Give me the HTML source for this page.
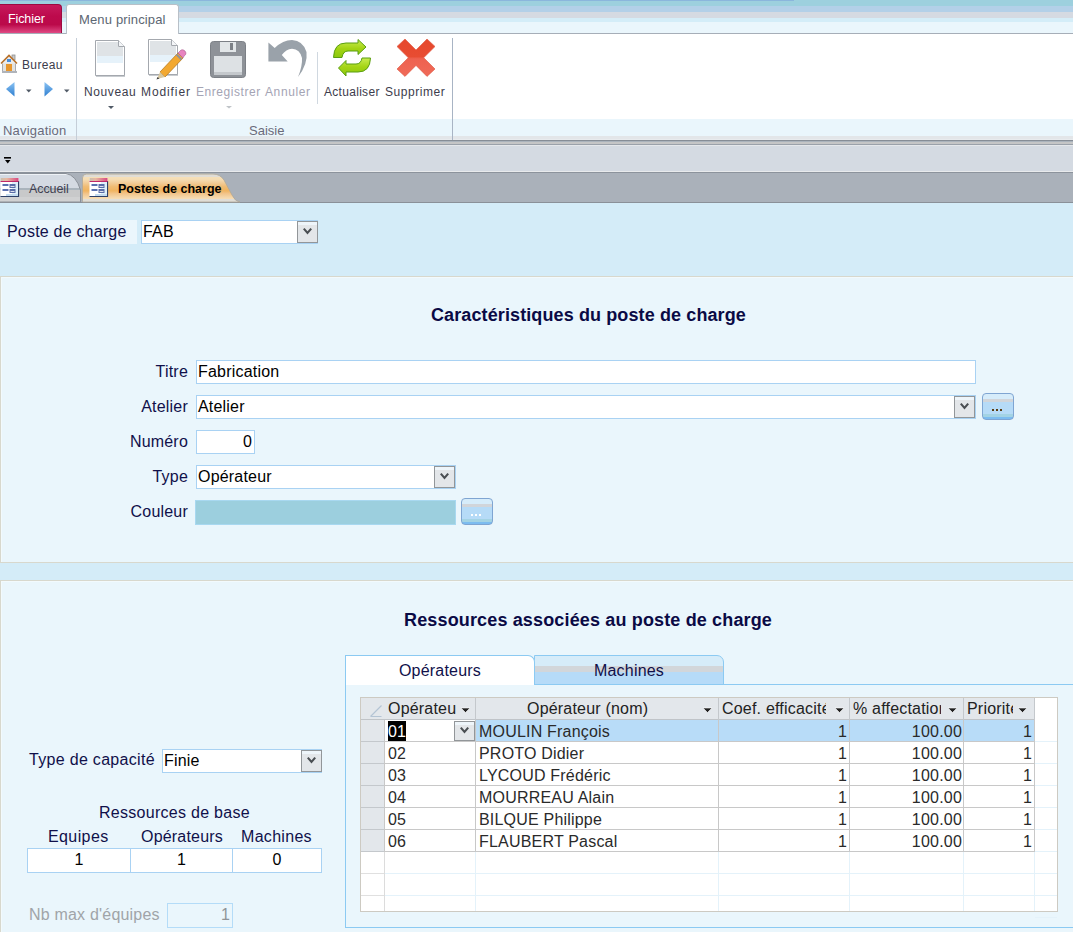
<!DOCTYPE html>
<html><head><meta charset="utf-8">
<style>
*{margin:0;padding:0;box-sizing:border-box}
html,body{width:1073px;height:932px;overflow:hidden;background:#eaf6fc;font-family:"Liberation Sans",sans-serif}
.a{position:absolute}
.rb{font-size:12px;color:#3c3c4c;white-space:nowrap}
.dis{color:#a4a4b4}
.f{font-size:16px;color:#10104a;white-space:nowrap}
.lbl{position:absolute;font-size:16px;color:#10104a;white-space:nowrap;text-align:right}
.tb{position:absolute;background:#fff;border:1px solid #a9d2f3}
.dd{position:absolute;background:#e3e6e9;border:1px solid #929699}
.dd:before{content:"";position:absolute;left:0;top:0;right:0;height:3px;background:#eef5fa}
.dd svg{position:absolute;left:0;top:0}
.btn{position:absolute;border:1px solid #7fa5d2;border-radius:4px;background:linear-gradient(#d6ecfa 0,#d6ecfa 5px,#d1d5da 5px,#d1d5da 8px,#b6dbf7 8px,#b6dbf7 20px,#a3d3e4 20px,#a3d3e4 23px,#7cbcf0 23px)}
.dots{position:absolute;left:9px;top:15px;width:10px;height:2px;background:linear-gradient(90deg,#5a3c10 0 2px,transparent 2px 4px,#5a3c10 4px 6px,transparent 6px 8px,#5a3c10 8px 10px)}
.sec{position:absolute;left:0;width:1073px;border-top:1px solid #d8d8cd;border-left:1px solid #d8d8cd;border-bottom:1px solid #d8d8cd;background:#eaf6fc;box-shadow:inset 1px 1px 0 #f2fafd}
.hdr{position:absolute;top:0;height:22px;background:#e3e7eb;border-right:1px solid #c2c6ca;border-bottom:1px solid #c2c6ca;font-size:16px;color:#222;white-space:nowrap;overflow:hidden}
.cell{position:absolute;height:22px;border-right:1px solid #c8c8c8;border-bottom:1px solid #c8c8c8;font-size:16px;color:#2a2a2a;white-space:nowrap;overflow:hidden;line-height:21px}
.f,.lbl,div[style*="font-size:16px"]{margin-top:1px;letter-spacing:0.2px}
.arr{position:absolute;width:0;height:0;border-left:4px solid transparent;border-right:4px solid transparent;border-top:4px solid #333}
</style></head><body>

<!-- title bands -->
<div class="a" style="left:0;top:0;width:1073px;height:6px;background:#9dd0de"></div>
<div class="a" style="left:0;top:0;width:794px;height:1px;background:#8bb6dc"></div>
<div class="a" style="left:0;top:6px;width:1073px;height:6px;background:#b3d0e8"></div>
<div class="a" style="left:0;top:12px;width:1073px;height:6px;background:#d5dae2"></div>
<div class="a" style="left:0;top:18px;width:1073px;height:4px;background:#d4edf8"></div>
<div class="a" style="left:0;top:22px;width:1073px;height:11px;background:#eaf6fc"></div>
<div class="a" style="left:0;top:33px;width:1073px;height:1px;background:#a6aeb8"></div>

<!-- Fichier -->
<div class="a" style="left:0;top:4px;width:62px;height:29px;border-radius:0 4px 0 0;background:linear-gradient(#c61a5c 0,#bd0a4c 40%,#bb0a4a 70%,#e04a84 100%);border:1px solid #9c0a40;border-left:none;border-bottom:none"></div>
<div class="a" style="left:8px;top:12px;font-size:12.5px;color:#fff;letter-spacing:-0.1px">Fichier</div>
<!-- Menu principal tab -->
<div class="a" style="left:66px;top:4px;width:113px;height:31px;background:#fff;border:1px solid #b8c0c8;border-bottom:none;border-radius:3px 3px 0 0"></div>
<div class="a rb" style="left:79px;top:12px;font-size:13px;color:#5c6672;letter-spacing:0.15px">Menu principal</div>

<!-- ribbon -->
<div class="a" style="left:0;top:34px;width:1073px;height:85px;background:#fff"></div>
<div class="a" style="left:0;top:119px;width:1073px;height:17px;background:#eaf6fc"></div>
<div class="a" style="left:0;top:136px;width:1073px;height:3px;background:#e3e6e9"></div>
<div class="a" style="left:0;top:139px;width:1073px;height:1px;background:#e8ebee"></div>
<div class="a" style="left:0;top:140px;width:1073px;height:1px;background:#868d96"></div>
<div class="a" style="left:0;top:141px;width:1073px;height:1px;background:#aab3bc"></div>
<div class="a" style="left:0;top:142px;width:1073px;height:2px;background:#c4c5c6"></div>
<div class="a" style="left:0;top:144px;width:1073px;height:1px;background:#9aa1aa"></div>
<div class="a" style="left:0;top:145px;width:1073px;height:1px;background:#e4e7ea"></div>
<div class="a" style="left:0;top:146px;width:1073px;height:25px;background:#d4dae2"></div>
<div class="a" style="left:0;top:171px;width:1073px;height:1px;background:#e8eaec"></div>
<div class="a" style="left:0;top:172px;width:1073px;height:1px;background:#8c939c"></div>
<div class="a" style="left:0;top:173px;width:1073px;height:29px;background:#aab1ba"></div>
<div class="a" style="left:0;top:202px;width:1073px;height:1px;background:#8a9098"></div>

<!-- group separators -->
<div class="a" style="left:76px;top:38px;width:1px;height:102px;background:#c5ced8"></div>
<div class="a" style="left:452px;top:38px;width:1px;height:102px;background:#a8b4c4"></div>
<div class="a" style="left:317px;top:52px;width:1px;height:52px;background:#d0d8e0"></div>

<div class="a rb" style="left:3px;top:123px;font-size:13px;color:#6a6a7a;letter-spacing:0.2px">Navigation</div>
<div class="a rb" style="left:249px;top:123px;font-size:13px;color:#6a6a7a">Saisie</div>

<div class="a rb" style="left:22px;top:58px;letter-spacing:0.35px">Bureau</div>
<div class="a rb" style="left:84px;top:85px;letter-spacing:0.6px">Nouveau</div>
<div class="a rb" style="left:141px;top:85px;letter-spacing:0.9px">Modifier</div>
<div class="a rb dis" style="left:196px;top:85px;letter-spacing:0.55px">Enregistrer</div>
<div class="a rb dis" style="left:265px;top:85px;letter-spacing:0.6px">Annuler</div>
<div class="a rb" style="left:324px;top:85px;letter-spacing:0.3px">Actualiser</div>
<div class="a rb" style="left:385px;top:85px;letter-spacing:0.55px">Supprimer</div>


<!-- ribbon icons -->
<svg class="a" style="left:0;top:0" width="460" height="210" viewBox="0 0 460 210">
 <defs>
  <linearGradient id="gb" x1="0" y1="0" x2="0" y2="1"><stop offset="0" stop-color="#8cc4f4"/><stop offset="1" stop-color="#2e7ed0"/></linearGradient>
  <linearGradient id="gg" x1="0" y1="0" x2="0" y2="1"><stop offset="0" stop-color="#c8ec50"/><stop offset="0.5" stop-color="#a4d414"/><stop offset="1" stop-color="#8cc80c"/></linearGradient>
  <linearGradient id="gr" x1="0" y1="0" x2="0" y2="1"><stop offset="0" stop-color="#e6482c"/><stop offset="0.47" stop-color="#e84c32"/><stop offset="0.53" stop-color="#ee6250"/><stop offset="1" stop-color="#f06a58"/></linearGradient>
 </defs>
 <!-- house -->
 <rect x="2.5" y="62.5" width="13" height="9" fill="#e2e2e0" stroke="#a8aab0"/>
 <rect x="12" y="55" width="3" height="5" fill="#c8c8c8" stroke="#909090" stroke-width="0.8"/>
 <path d="M1,63.5 L9,55.5 L17,63.5" fill="#ececec" stroke="#b87028" stroke-width="1.6"/>
 <rect x="7" y="59" width="4" height="3" fill="#4c8ed8"/>
 <rect x="6" y="64" width="6" height="8" fill="#e8962c"/>
 <rect x="2" y="71" width="15" height="2" fill="#b0b4ba"/>
 <!-- nav arrows -->
 <path d="M6,89 L14.5,82 L14.5,96.5 Z" fill="url(#gb)"/>
 <path d="M53,89 L44.5,82 L44.5,96.5 Z" fill="url(#gb)"/>
 <path d="M26,89.5 H31.5 L28.75,92.5 Z" fill="#505a66"/>
 <path d="M64,89.5 H69.5 L66.75,92.5 Z" fill="#505a66"/>
 <!-- Nouveau page -->
 <rect x="96" y="75" width="29" height="2" fill="#c8ccd0"/>
 <path d="M95.5,40.5 H118.5 L124.5,46.5 V75.5 H95.5 Z" fill="#fff" stroke="#a4a8ae"/>
 <rect x="97" y="42" width="21" height="14" fill="#dfe3e6"/>
 <rect x="97" y="47" width="26" height="9" fill="#dfe3e6"/>
 <rect x="97" y="56" width="26" height="7" fill="#e6f2fa"/>
 <path d="M118.5,40.5 V46.5 H124.5" fill="#f4f6f8" stroke="#a4a8ae"/>
 <path d="M108,106 H114 L111,109 Z" fill="#505a66"/>
 <!-- Modifier page -->
 <rect x="149" y="74" width="29" height="2" fill="#c8ccd0"/>
 <path d="M148.5,39.5 H171.5 L177.5,45.5 V74.5 H148.5 Z" fill="#fff" stroke="#a4a8ae"/>
 <rect x="150" y="41" width="21" height="14" fill="#dfe3e6"/>
 <rect x="150" y="46" width="26" height="9" fill="#dfe3e6"/>
 <rect x="150" y="55" width="26" height="7" fill="#e6f2fa"/>
 <path d="M171.5,39.5 V45.5 H177.5" fill="#f4f6f8" stroke="#a4a8ae"/>
 <path d="M160,72 L178,53 L183,58 L165,77 Z" fill="#f2a830" stroke="#b87a20" stroke-width="0.8"/>
 <path d="M178,53 L181,50 Q183,49 185,51 L186,53 Q186,55 184,56 L183,58 Z" fill="#e884c0" stroke="#a86090" stroke-width="0.6"/>
 <path d="M176.5,54.5 L181.5,59.5" stroke="#909098" stroke-width="2"/>
 <path d="M160,72 L165,77 L157,79 Z" fill="#d8c8a0"/>
 <path d="M157.5,77 L159.5,78.5 L156.5,79.5 Z" fill="#404040"/>
 <!-- floppy -->
 <rect x="210.5" y="41.5" width="35" height="36" rx="3" fill="#8e9298" stroke="#7c8086"/>
 <rect x="220" y="42" width="16" height="10" fill="#e2e6e8"/>
 <rect x="230" y="43" width="3" height="7" fill="#7c8086"/>
 <rect x="214" y="56" width="28" height="19" fill="#dde1e4"/>
 <rect x="214" y="72" width="28" height="3" fill="#c4c8cc"/>
 <path d="M226,106 H232 L229,108.5 Z" fill="#c0c4c8"/>
 <!-- undo -->
 <path d="M268.4,42.4 L274.7,48 Q283,40 292,40 Q303,40.5 306.5,52 Q308,64 298,77 Q302.5,66 302,58 Q300,49 292,48.7 Q286,49 281.8,55 L287.7,61.5 L268.4,61.5 Z" fill="#9aa2aa"/>
 <!-- refresh -->
 <path d="M333.5,57.5 Q334,43 346,43 L358,43 L358,39.5 L366,47 L358,54.5 L358,51 L348,51 Q343,51 342,57.5 Z" fill="url(#gg)" stroke="#5a9e10" stroke-width="1" stroke-linejoin="round"/>
 <path d="M370.5,58 Q370,72 358,72 L346,72 L346,76 L338.5,68 L346,60.5 L346,64 L356,64 Q361,64 362,58 Z" fill="url(#gg)" stroke="#5a9e10" stroke-width="1" stroke-linejoin="round"/>
 <!-- X -->
 <path d="M416,50 L427,39 L435,46.5 L423.7,57.7 L435,69 L427,76.4 L416,65.4 L405,76.4 L397,69 L408.3,57.7 L397,46.5 L405,39 Z" fill="url(#gr)" stroke="#e0604c" stroke-width="0.7" stroke-linejoin="round"/>
 <!-- toolbar glyph -->
 <rect x="4" y="157" width="7" height="1.6" fill="#000"/>
 <path d="M5,160 H10.5 L7.75,163.5 Z" fill="#000"/>
</svg>


<!-- document tabs -->
<svg class="a" style="left:0;top:170px" width="260" height="34" viewBox="0 170 260 34">
 <defs>
  <linearGradient id="go" x1="0" y1="174" x2="0" y2="202" gradientUnits="userSpaceOnUse">
   <stop offset="0" stop-color="#d8d2c6"/><stop offset="0.04" stop-color="#e0ddd6"/><stop offset="0.1" stop-color="#e0ddd6"/>
   <stop offset="0.12" stop-color="#f5dfb8"/><stop offset="0.2" stop-color="#f5dcb2"/><stop offset="0.32" stop-color="#f2cc98"/>
   <stop offset="0.45" stop-color="#f0bc74"/><stop offset="0.6" stop-color="#f0b460"/><stop offset="0.7" stop-color="#f2c48a"/>
   <stop offset="0.8" stop-color="#f4d2a2"/><stop offset="0.88" stop-color="#f6dcb4"/><stop offset="0.9" stop-color="#e0ddd6"/><stop offset="1" stop-color="#e0ddd6"/>
  </linearGradient>
  <linearGradient id="gac" x1="0" y1="174" x2="0" y2="202" gradientUnits="userSpaceOnUse">
   <stop offset="0" stop-color="#f2f4f6"/><stop offset="0.05" stop-color="#d4dae2"/><stop offset="0.5" stop-color="#d4dae2"/>
   <stop offset="0.5" stop-color="#aab4bc"/><stop offset="0.56" stop-color="#aab4bc"/><stop offset="0.56" stop-color="#c8c9ca"/>
   <stop offset="0.82" stop-color="#c8c9ca"/><stop offset="0.82" stop-color="#d0d1d2"/><stop offset="1" stop-color="#d0d1d2"/>
  </linearGradient>
  <linearGradient id="gpk" x1="0" y1="0" x2="1" y2="0"><stop offset="0" stop-color="#c8c0b0"/><stop offset="0.35" stop-color="#e8b8a0"/><stop offset="1" stop-color="#d84880"/></linearGradient>
 </defs>
 <path d="M-2,202 V173.5 H66 Q76,175 80.5,190 V202 Z" fill="url(#gac)" stroke="#8a9098" stroke-width="1"/>
 <rect x="0" y="174" width="66" height="1" fill="#eef2f6"/>
 <path d="M82.5,202 V178 Q82.5,174 86.5,174 H213 Q220,174 224,180 L232,195 Q235,201.5 240,202 Z" fill="url(#go)" stroke="#b0a898" stroke-width="0.8"/>
 <g id="fi">
  <rect x="0.5" y="178" width="18" height="18.5" fill="#fff"/>
  <path d="M18.5,181 V196.5 H0.5" fill="none" stroke="#2c4068" stroke-width="1.2"/>
  <rect x="0.5" y="178" width="18" height="3" fill="url(#gpk)"/>
  <rect x="0.5" y="181" width="18" height="1" fill="#c02868"/>
  <rect x="12" y="182" width="6" height="14" fill="#dff0fa"/>
  <rect x="6" y="194" width="12" height="2" fill="#c4dcf0"/>
  <rect x="2.5" y="184" width="6" height="2" fill="#5a70b0"/>
  <rect x="2.5" y="189" width="6" height="2" fill="#5a70b0"/>
  <rect x="9.5" y="184" width="6" height="4" fill="#5a6ea8"/>
  <rect x="10.5" y="186" width="4" height="0.8" fill="#fff"/>
  <rect x="9.5" y="189" width="6" height="4" fill="#5a6ea8"/>
  <rect x="10.5" y="191" width="4" height="0.8" fill="#fff"/>
 </g>
 <use href="#fi" x="89"/>
</svg>
<div class="a" style="left:29px;top:182px;font-size:12.5px;color:#404050;letter-spacing:-0.1px">Accueil</div>
<div class="a" style="left:118px;top:182px;font-size:12.5px;font-weight:bold;color:#000;letter-spacing:0px">Postes de charge</div>

<!-- FORM AREA -->
<div class="a" style="left:0;top:203px;width:1073px;height:729px;background:#d4ecf8"></div>
<div class="a" style="left:0;top:220px;width:137px;height:24px;background:#ebf6fc"></div>
<div class="a f" style="left:7px;top:222px">Poste de charge</div>
<div class="tb" style="left:141px;top:220px;width:177px;height:24px"></div>
<div class="a f" style="left:143px;top:222px;color:#000">FAB</div>
<div class="dd" style="left:297px;top:221px;width:21px;height:22px"><svg width="19" height="20"><path d="M5.8,6.6 L9.5,10.9 L13.2,6.6" fill="none" stroke="#4a4e52" stroke-width="2.1"/></svg></div>

<!-- section 1 -->
<div class="sec" style="top:276px;height:287px"></div>
<div class="a f" style="left:431px;top:304px;font-size:18px;font-weight:bold;color:#0a0a45;letter-spacing:0.11px">Caractéristiques du poste de charge</div>
<div class="lbl" style="left:100px;top:362px;width:88px">Titre</div>
<div class="lbl" style="left:100px;top:397px;width:88px">Atelier</div>
<div class="lbl" style="left:100px;top:432px;width:88px">Numéro</div>
<div class="lbl" style="left:100px;top:467px;width:88px">Type</div>
<div class="lbl" style="left:100px;top:502px;width:88px">Couleur</div>
<div class="tb" style="left:196px;top:360px;width:780px;height:24px"></div>
<div class="a f" style="left:198px;top:362px;color:#000">Fabrication</div>
<div class="tb" style="left:196px;top:395px;width:780px;height:24px"></div>
<div class="a f" style="left:198px;top:397px;color:#000">Atelier</div>
<div class="dd" style="left:954px;top:396px;width:21px;height:22px"><svg width="19" height="20"><path d="M5.8,6.6 L9.5,10.9 L13.2,6.6" fill="none" stroke="#4a4e52" stroke-width="2.1"/></svg></div>
<div class="btn" style="left:982px;top:393px;width:32px;height:27px"><div class="dots"></div></div>
<div class="tb" style="left:196px;top:430px;width:59px;height:24px"></div>
<div class="a f" style="left:196px;top:432px;width:56px;text-align:right;color:#000">0</div>
<div class="tb" style="left:196px;top:465px;width:260px;height:24px"></div>
<div class="a f" style="left:198px;top:467px;color:#000">Opérateur</div>
<div class="dd" style="left:434px;top:466px;width:21px;height:22px"><svg width="19" height="20"><path d="M5.8,6.6 L9.5,10.9 L13.2,6.6" fill="none" stroke="#4a4e52" stroke-width="2.1"/></svg></div>
<div class="a" style="left:195px;top:500px;width:261px;height:25px;background:#9ccfde;border:1px solid #a8d8f0"></div>
<div class="btn" style="left:461px;top:498px;width:32px;height:27px"><div class="dots" style="background:linear-gradient(90deg,#fff 0 2px,transparent 2px 4px,#fff 4px 6px,transparent 6px 8px,#fff 8px 10px)"></div></div>

<!-- section 2 -->
<div class="sec" style="top:580px;height:360px"></div>
<div class="a f" style="left:404px;top:609px;font-size:18px;font-weight:bold;color:#0a0a45;letter-spacing:0.15px">Ressources associées au poste de charge</div>

<div class="a f" style="left:29px;top:750px;letter-spacing:0.31px">Type de capacité</div>
<div class="tb" style="left:162px;top:749px;width:160px;height:24px"></div>
<div class="a f" style="left:164px;top:751px;color:#000">Finie</div>
<div class="dd" style="left:301px;top:750px;width:21px;height:22px"><svg width="19" height="20"><path d="M5.8,6.6 L9.5,10.9 L13.2,6.6" fill="none" stroke="#4a4e52" stroke-width="2.1"/></svg></div>
<div class="a f" style="left:99px;top:803px;letter-spacing:0.28px">Ressources de base</div>
<div class="a f" style="left:48px;top:827px;letter-spacing:0.4px">Equipes</div>
<div class="a f" style="left:141px;top:827px">Opérateurs</div>
<div class="a f" style="left:241px;top:827px;letter-spacing:0.3px">Machines</div>
<div class="tb" style="left:27px;top:848px;width:104px;height:25px"></div>
<div class="tb" style="left:130px;top:848px;width:103px;height:25px"></div>
<div class="tb" style="left:232px;top:848px;width:90px;height:25px"></div>
<div class="a f" style="left:27px;top:850px;width:104px;text-align:center;color:#000">1</div>
<div class="a f" style="left:130px;top:850px;width:103px;text-align:center;color:#000">1</div>
<div class="a f" style="left:232px;top:850px;width:90px;text-align:center;color:#000">0</div>
<div class="a f" style="left:29px;top:905px;color:#a0a4a8">Nb max d'équipes</div>
<div class="a" style="left:167px;top:903px;width:66px;height:25px;border:1px solid #b4dcf8;background:#eaf6fc"></div>
<div class="a f" style="left:167px;top:905px;width:63px;text-align:right;color:#909498">1</div>



<!-- tab control -->
<div class="a" style="left:345px;top:684px;width:740px;height:244px;border:1px solid #8ccaf2;border-right:none;background:#eaf6fc"></div>
<div class="a" style="left:534px;top:655px;width:190px;height:30px;border:1px solid #8ccaf2;border-radius:0 7px 0 0;background:linear-gradient(#d6ecf9 0,#d6ecf9 10px,#d2d6da 10px,#d2d6da 16px,#b6dbf8 16px)"></div>
<div class="a" style="left:345px;top:655px;width:190px;height:30px;border:1px solid #8ccaf2;border-bottom:none;border-radius:0 7px 0 0;background:#fff"></div>
<div class="a f" style="left:345px;top:661px;width:190px;text-align:center">Opérateurs</div>
<div class="a f" style="left:534px;top:661px;width:190px;text-align:center">Machines</div>

<!-- grid -->
<div class="a" style="left:360px;top:697px;width:698px;height:215px;background:#fff;border:1px solid #cdcac2"></div>
<div class="a" style="left:361px;top:698px;width:673px;height:22px;background:#e3e7eb;border-bottom:1px solid #c0c4c8"></div>
<div class="a" style="left:475px;top:698px;width:1px;height:22px;background:#c4c8cc"></div>
<div class="a" style="left:718px;top:698px;width:1px;height:22px;background:#c4c8cc"></div>
<div class="a" style="left:849px;top:698px;width:1px;height:22px;background:#c4c8cc"></div>
<div class="a" style="left:963px;top:698px;width:1px;height:22px;background:#c4c8cc"></div>
<div class="a" style="left:1034px;top:698px;width:1px;height:22px;background:#c4c8cc"></div>
<svg class="a" style="left:368px;top:703px" width="16" height="16"><path d="M2.5,13.5 L13.5,2.5 M2.5,13.5 H13.5" stroke="#b4c4d4" stroke-width="1.2" fill="none"/></svg>
<div class="a" style="left:388px;top:699px;width:68px;overflow:hidden;font-size:16px;color:#222;white-space:nowrap">Opérateu</div>
<svg class="a" style="left:460px;top:707px" width="11" height="7"><path d="M1,1 H10 L5.5,5.5 Z" fill="#222" stroke="#fff" stroke-width="0.6"/></svg>
<div class="a" style="left:527px;top:699px;width:173px;overflow:hidden;font-size:16px;color:#222;white-space:nowrap">Opérateur (nom)</div>
<svg class="a" style="left:702px;top:707px" width="11" height="7"><path d="M1,1 H10 L5.5,5.5 Z" fill="#222" stroke="#fff" stroke-width="0.6"/></svg>
<div class="a" style="left:722px;top:699px;width:104px;overflow:hidden;font-size:16px;color:#222;white-space:nowrap">Coef. efficacité</div>
<svg class="a" style="left:834px;top:707px" width="11" height="7"><path d="M1,1 H10 L5.5,5.5 Z" fill="#222" stroke="#fff" stroke-width="0.6"/></svg>
<div class="a" style="left:853px;top:699px;width:88px;overflow:hidden;font-size:16px;color:#222;white-space:nowrap">% affectation</div>
<svg class="a" style="left:947px;top:707px" width="11" height="7"><path d="M1,1 H10 L5.5,5.5 Z" fill="#222" stroke="#fff" stroke-width="0.6"/></svg>
<div class="a" style="left:967px;top:699px;width:46px;overflow:hidden;font-size:16px;color:#222;white-space:nowrap">Priorité</div>
<svg class="a" style="left:1017px;top:707px" width="11" height="7"><path d="M1,1 H10 L5.5,5.5 Z" fill="#222" stroke="#fff" stroke-width="0.6"/></svg>
<div class="a" style="left:361px;top:720px;width:23px;height:22px;background:#e3e7eb;border-bottom:1px solid #c4c8cc"></div>
<div class="a" style="left:384px;top:720px;width:650px;height:22px;background:#b8dcf8;border-bottom:1px solid #c8c8c8;border-left:1px solid #c8c8c8"></div>
<div class="a" style="left:475px;top:720px;width:1px;height:22px;background:#c8c8c8"></div>
<div class="a" style="left:718px;top:720px;width:1px;height:22px;background:#c8c8c8"></div>
<div class="a" style="left:849px;top:720px;width:1px;height:22px;background:#c8c8c8"></div>
<div class="a" style="left:963px;top:720px;width:1px;height:22px;background:#c8c8c8"></div>
<div class="a" style="left:1034px;top:720px;width:1px;height:22px;background:#c8c8c8"></div>
<div class="a" style="left:385px;top:720px;width:90px;height:21px;background:#fff"></div>
<div class="a" style="left:388px;top:721px;width:18px;height:20px;background:#000"></div>
<div class="a" style="left:388px;top:722px;font-size:16px;color:#fff">01</div>
<div class="dd" style="left:454px;top:721px;width:21px;height:20px"><svg width="19" height="20"><path d="M5.8,5.6 L9.5,9.9 L13.2,5.6" fill="none" stroke="#4a4e52" stroke-width="2.1"/></svg></div>
<div class="a" style="left:479px;top:722px;font-size:16px;color:#2a2a2a;white-space:nowrap">MOULIN François</div>
<div class="a" style="left:718px;top:722px;width:129px;text-align:right;font-size:16px;color:#2a2a2a">1</div>
<div class="a" style="left:849px;top:722px;width:113px;text-align:right;font-size:16px;color:#2a2a2a">100.00</div>
<div class="a" style="left:963px;top:722px;width:69px;text-align:right;font-size:16px;color:#2a2a2a">1</div>
<div class="a" style="left:361px;top:742px;width:23px;height:22px;background:#e3e7eb;border-bottom:1px solid #c4c8cc"></div>
<div class="a" style="left:384px;top:742px;width:650px;height:22px;background:#fff;border-bottom:1px solid #c8c8c8;border-left:1px solid #c8c8c8"></div>
<div class="a" style="left:475px;top:742px;width:1px;height:22px;background:#c8c8c8"></div>
<div class="a" style="left:718px;top:742px;width:1px;height:22px;background:#c8c8c8"></div>
<div class="a" style="left:849px;top:742px;width:1px;height:22px;background:#c8c8c8"></div>
<div class="a" style="left:963px;top:742px;width:1px;height:22px;background:#c8c8c8"></div>
<div class="a" style="left:1034px;top:742px;width:1px;height:22px;background:#c8c8c8"></div>
<div class="a" style="left:388px;top:744px;font-size:16px;color:#2a2a2a">02</div>
<div class="a" style="left:479px;top:744px;font-size:16px;color:#2a2a2a;white-space:nowrap">PROTO Didier</div>
<div class="a" style="left:718px;top:744px;width:129px;text-align:right;font-size:16px;color:#2a2a2a">1</div>
<div class="a" style="left:849px;top:744px;width:113px;text-align:right;font-size:16px;color:#2a2a2a">100.00</div>
<div class="a" style="left:963px;top:744px;width:69px;text-align:right;font-size:16px;color:#2a2a2a">1</div>
<div class="a" style="left:361px;top:764px;width:23px;height:22px;background:#e3e7eb;border-bottom:1px solid #c4c8cc"></div>
<div class="a" style="left:384px;top:764px;width:650px;height:22px;background:#fff;border-bottom:1px solid #c8c8c8;border-left:1px solid #c8c8c8"></div>
<div class="a" style="left:475px;top:764px;width:1px;height:22px;background:#c8c8c8"></div>
<div class="a" style="left:718px;top:764px;width:1px;height:22px;background:#c8c8c8"></div>
<div class="a" style="left:849px;top:764px;width:1px;height:22px;background:#c8c8c8"></div>
<div class="a" style="left:963px;top:764px;width:1px;height:22px;background:#c8c8c8"></div>
<div class="a" style="left:1034px;top:764px;width:1px;height:22px;background:#c8c8c8"></div>
<div class="a" style="left:388px;top:766px;font-size:16px;color:#2a2a2a">03</div>
<div class="a" style="left:479px;top:766px;font-size:16px;color:#2a2a2a;white-space:nowrap">LYCOUD Frédéric</div>
<div class="a" style="left:718px;top:766px;width:129px;text-align:right;font-size:16px;color:#2a2a2a">1</div>
<div class="a" style="left:849px;top:766px;width:113px;text-align:right;font-size:16px;color:#2a2a2a">100.00</div>
<div class="a" style="left:963px;top:766px;width:69px;text-align:right;font-size:16px;color:#2a2a2a">1</div>
<div class="a" style="left:361px;top:786px;width:23px;height:22px;background:#e3e7eb;border-bottom:1px solid #c4c8cc"></div>
<div class="a" style="left:384px;top:786px;width:650px;height:22px;background:#fff;border-bottom:1px solid #c8c8c8;border-left:1px solid #c8c8c8"></div>
<div class="a" style="left:475px;top:786px;width:1px;height:22px;background:#c8c8c8"></div>
<div class="a" style="left:718px;top:786px;width:1px;height:22px;background:#c8c8c8"></div>
<div class="a" style="left:849px;top:786px;width:1px;height:22px;background:#c8c8c8"></div>
<div class="a" style="left:963px;top:786px;width:1px;height:22px;background:#c8c8c8"></div>
<div class="a" style="left:1034px;top:786px;width:1px;height:22px;background:#c8c8c8"></div>
<div class="a" style="left:388px;top:788px;font-size:16px;color:#2a2a2a">04</div>
<div class="a" style="left:479px;top:788px;font-size:16px;color:#2a2a2a;white-space:nowrap">MOURREAU Alain</div>
<div class="a" style="left:718px;top:788px;width:129px;text-align:right;font-size:16px;color:#2a2a2a">1</div>
<div class="a" style="left:849px;top:788px;width:113px;text-align:right;font-size:16px;color:#2a2a2a">100.00</div>
<div class="a" style="left:963px;top:788px;width:69px;text-align:right;font-size:16px;color:#2a2a2a">1</div>
<div class="a" style="left:361px;top:808px;width:23px;height:22px;background:#e3e7eb;border-bottom:1px solid #c4c8cc"></div>
<div class="a" style="left:384px;top:808px;width:650px;height:22px;background:#fff;border-bottom:1px solid #c8c8c8;border-left:1px solid #c8c8c8"></div>
<div class="a" style="left:475px;top:808px;width:1px;height:22px;background:#c8c8c8"></div>
<div class="a" style="left:718px;top:808px;width:1px;height:22px;background:#c8c8c8"></div>
<div class="a" style="left:849px;top:808px;width:1px;height:22px;background:#c8c8c8"></div>
<div class="a" style="left:963px;top:808px;width:1px;height:22px;background:#c8c8c8"></div>
<div class="a" style="left:1034px;top:808px;width:1px;height:22px;background:#c8c8c8"></div>
<div class="a" style="left:388px;top:810px;font-size:16px;color:#2a2a2a">05</div>
<div class="a" style="left:479px;top:810px;font-size:16px;color:#2a2a2a;white-space:nowrap">BILQUE Philippe</div>
<div class="a" style="left:718px;top:810px;width:129px;text-align:right;font-size:16px;color:#2a2a2a">1</div>
<div class="a" style="left:849px;top:810px;width:113px;text-align:right;font-size:16px;color:#2a2a2a">100.00</div>
<div class="a" style="left:963px;top:810px;width:69px;text-align:right;font-size:16px;color:#2a2a2a">1</div>
<div class="a" style="left:361px;top:830px;width:23px;height:22px;background:#e3e7eb;border-bottom:1px solid #c4c8cc"></div>
<div class="a" style="left:384px;top:830px;width:650px;height:22px;background:#fff;border-bottom:1px solid #c8c8c8;border-left:1px solid #c8c8c8"></div>
<div class="a" style="left:475px;top:830px;width:1px;height:22px;background:#c8c8c8"></div>
<div class="a" style="left:718px;top:830px;width:1px;height:22px;background:#c8c8c8"></div>
<div class="a" style="left:849px;top:830px;width:1px;height:22px;background:#c8c8c8"></div>
<div class="a" style="left:963px;top:830px;width:1px;height:22px;background:#c8c8c8"></div>
<div class="a" style="left:1034px;top:830px;width:1px;height:22px;background:#c8c8c8"></div>
<div class="a" style="left:388px;top:832px;font-size:16px;color:#2a2a2a">06</div>
<div class="a" style="left:479px;top:832px;font-size:16px;color:#2a2a2a;white-space:nowrap">FLAUBERT Pascal</div>
<div class="a" style="left:718px;top:832px;width:129px;text-align:right;font-size:16px;color:#2a2a2a">1</div>
<div class="a" style="left:849px;top:832px;width:113px;text-align:right;font-size:16px;color:#2a2a2a">100.00</div>
<div class="a" style="left:963px;top:832px;width:69px;text-align:right;font-size:16px;color:#2a2a2a">1</div>
<div class="a" style="left:1035px;top:741px;width:22px;height:1px;background:#e4f2fa"></div>
<div class="a" style="left:1035px;top:763px;width:22px;height:1px;background:#e4f2fa"></div>
<div class="a" style="left:1035px;top:785px;width:22px;height:1px;background:#e4f2fa"></div>
<div class="a" style="left:1035px;top:807px;width:22px;height:1px;background:#e4f2fa"></div>
<div class="a" style="left:1035px;top:829px;width:22px;height:1px;background:#e4f2fa"></div>
<div class="a" style="left:1035px;top:851px;width:22px;height:1px;background:#e4f2fa"></div>
<div class="a" style="left:1035px;top:873px;width:22px;height:1px;background:#e4f2fa"></div>
<div class="a" style="left:1035px;top:895px;width:22px;height:1px;background:#e4f2fa"></div>
<div class="a" style="left:1035px;top:917px;width:22px;height:1px;background:#e4f2fa"></div>
<div class="a" style="left:361px;top:873px;width:23px;height:1px;background:#e0e0e0"></div>
<div class="a" style="left:385px;top:873px;width:650px;height:1px;background:#e4f2fa"></div>
<div class="a" style="left:361px;top:895px;width:23px;height:1px;background:#e0e0e0"></div>
<div class="a" style="left:385px;top:895px;width:650px;height:1px;background:#e4f2fa"></div>
<div class="a" style="left:384px;top:852px;width:1px;height:59px;background:#dcdcdc"></div>
<div class="a" style="left:475px;top:852px;width:1px;height:59px;background:#e4f2fa"></div>
<div class="a" style="left:718px;top:852px;width:1px;height:59px;background:#e4f2fa"></div>
<div class="a" style="left:849px;top:852px;width:1px;height:59px;background:#e4f2fa"></div>
<div class="a" style="left:963px;top:852px;width:1px;height:59px;background:#e4f2fa"></div>
<div class="a" style="left:1034px;top:852px;width:1px;height:59px;background:#e4f2fa"></div>
</body></html>
